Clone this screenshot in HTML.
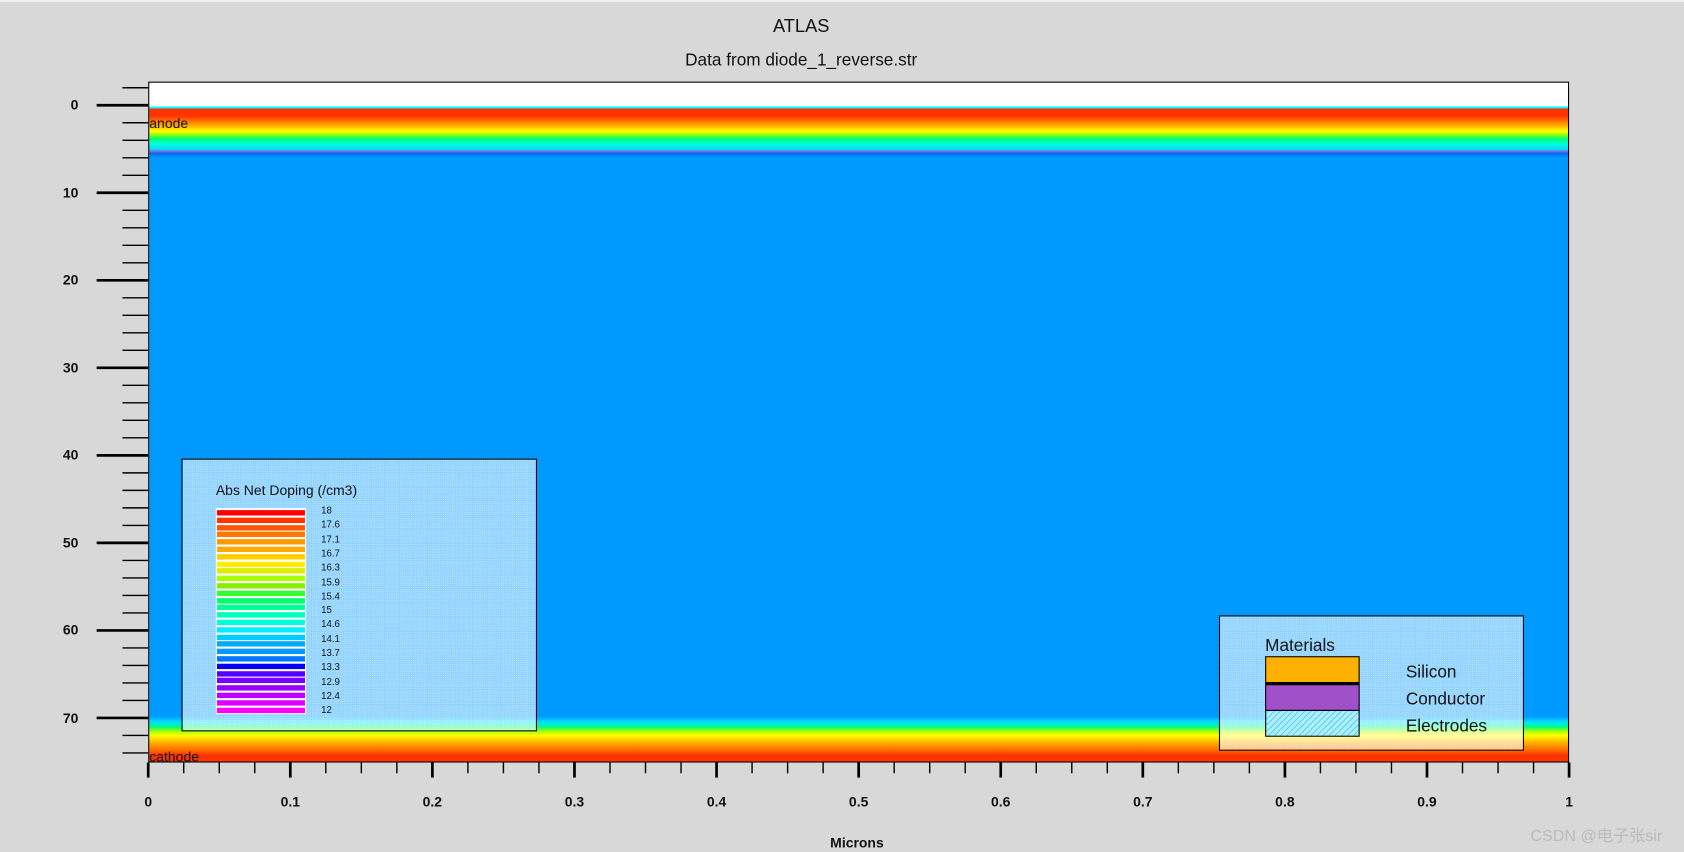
<!DOCTYPE html>
<html><head><meta charset="utf-8"><style>
html,body{margin:0;padding:0;width:1684px;height:852px;overflow:hidden;background:#d8d8d8;}
#s{position:absolute;left:0;top:0;width:1568px;height:793px;transform:scale(1.07398);transform-origin:0 0;font-family:"Liberation Sans",Arial,sans-serif;color:#111;}
.a{position:absolute;}
#plot{left:138px;top:76px;width:1323px;height:634px;border:1px solid #000;box-sizing:border-box;background:linear-gradient(to bottom,#fff 0,#fff 22px,#00ffff 22px,#00ffff 24px,#ff3300 24px,#ff3300 31px,#ff7700 36px,#ffaa00 40px,#ffff00 45px,#aaff00 48px,#00ff66 52px,#00ffdd 57px,#00ddff 62px,#8866cc 64px,#0066ff 66px,#0088ff 68px,#0099ff 70px,#0099ff 590px,#00ddff 595px,#00ff88 600px,#aaff00 604px,#ffff00 608px,#ffaa00 615px,#ff6600 622px,#ff3300 626px,#ff3300 634px);}
.yl{position:absolute;width:40px;text-align:right;font-size:13px;font-weight:600;}
.xl{position:absolute;width:40px;text-align:center;font-size:13px;top:739px;font-weight:600;}
.leg{border:1px solid #000;background:rgba(255,255,255,0.55);background-image:radial-gradient(rgba(255,255,255,0.35) 0.6px,transparent 0.8px);background-size:2px 2px;}
.bar{position:absolute;left:202px;width:82px;height:5px;}
.bl{position:absolute;left:299px;font-size:9px;}
</style></head><body><div id="s">
<div class="a" style="left:0;top:0;width:1568px;height:2px;background:#eee"></div>
<div class="a" style="left:646px;top:15px;width:200px;text-align:center;font-size:17px">ATLAS</div>
<div class="a" style="left:546px;top:48px;width:400px;text-align:center;font-size:16px">Data from diode_1_reverse.str</div>
<div id="plot" class="a"></div>
<div class="a" style="left:139px;top:107px;font-size:13px">anode</div>
<div class="a" style="left:139px;top:697px;font-size:13px">cathode</div>
<svg class="a" style="left:0;top:0" width="1568" height="793">
<g stroke="#000" stroke-width="1.3" id="yt"></g>
</svg>
<div class="leg a" style="left:169px;top:427px;width:329px;height:252px"></div>
<div class="a" style="left:201px;top:449px;font-size:13px">Abs Net Doping (/cm3)</div>
<div class="a" style="left:201px;top:473px;width:84px;height:192px;background:#fff"></div>
<div id="bars"></div>
<div class="leg a" style="left:1135px;top:573px;width:282px;height:124px"></div>
<div class="a" style="left:1178px;top:593px;font-size:16px">Materials</div>
<div class="a" style="left:1178px;top:611px;width:86px;height:23px;background:#ffb000;border:1px solid #000"></div>
<div class="a" style="left:1178px;top:636px;width:86px;height:23px;background:#a050c8;border:1px solid #000;border-top:2px solid #000"></div>
<div class="a" style="left:1178px;top:661px;width:86px;height:23px;border:1px solid #000;background:repeating-linear-gradient(-45deg,#aaf0ff 0,#aaf0ff 3px,#66ccee 3px,#66ccee 4px)"></div>
<div class="a" style="left:1309px;top:618px;font-size:16px">Silicon</div>
<div class="a" style="left:1309px;top:643px;font-size:16px">Conductor</div>
<div class="a" style="left:1309px;top:668px;font-size:16px">Electrodes</div>
<div class="a" style="left:773px;top:777px;font-size:13px;font-weight:bold">Microns</div>
<div class="a" style="left:1425px;top:767px;font-size:15px;color:#bbb;font-family:'Liberation Sans','Noto Sans CJK SC',sans-serif">CSDN @电子张sir</div>
<div id="lab"></div>
</div>
<script>
var g=document.getElementById('yt'),h='';
for(var v=-2;v<=74;v+=2){var y=98+v*8.15;if(y>711)break;var M=v%10==0;h+='<line x1="'+(M?90:114)+'" y1="'+y+'" x2="138" y2="'+y+'" stroke-width="'+(M?2.5:1.3)+'"/>';}
for(var i=0;i<=40;i++){var x=138+i*33.075;var M=i%4==0;h+='<line x1="'+x+'" y1="710" x2="'+x+'" y2="'+(M?724:720)+'" stroke-width="'+(M?2.5:1.3)+'"/>';}
g.innerHTML=h;
var L='';
for(var v=0;v<=70;v+=10){L+='<div class="yl" style="left:33px;top:'+(90+v*8.15)+'px">'+v+'</div>';}
var xs=['0','0.1','0.2','0.3','0.4','0.5','0.6','0.7','0.8','0.9','1'];
for(var i=0;i<11;i++){L+='<div class="xl" style="left:'+(118+i*132.3)+'px">'+xs[i]+'</div>';}
var cols=['#ff0000','#ff3300','#ff5500','#ff7700','#ff9900','#ffaa00','#ffcc00','#ffdd00','#ffee00','#ddee00','#aaff00','#88ee00','#33ff33','#00ff66','#00ff99','#00ffbb','#00ffdd','#00eeff','#00ccff','#00aaff','#0099ff','#0077ff','#0055ff','#0000ee','#5500ff','#7700ff','#9900ff','#bb00ff','#dd00ff','#ff00ff'];
var B='';for(var i=0;i<28;i++){B+='<div class="bar" style="top:'+(475+i*6.8)+'px;background:'+cols[Math.round(i*29/27)]+'"></div>';}
var bl=['18','17.6','17.1','16.7','16.3','15.9','15.4','15','14.6','14.1','13.7','13.3','12.9','12.4','12'];
for(var i=0;i<15;i++){B+='<div class="bl" style="top:'+(470+i*13.3)+'px">'+bl[i]+'</div>';}
document.getElementById('bars').innerHTML=B;
document.getElementById('lab').innerHTML=L;
</script>
</body></html>
